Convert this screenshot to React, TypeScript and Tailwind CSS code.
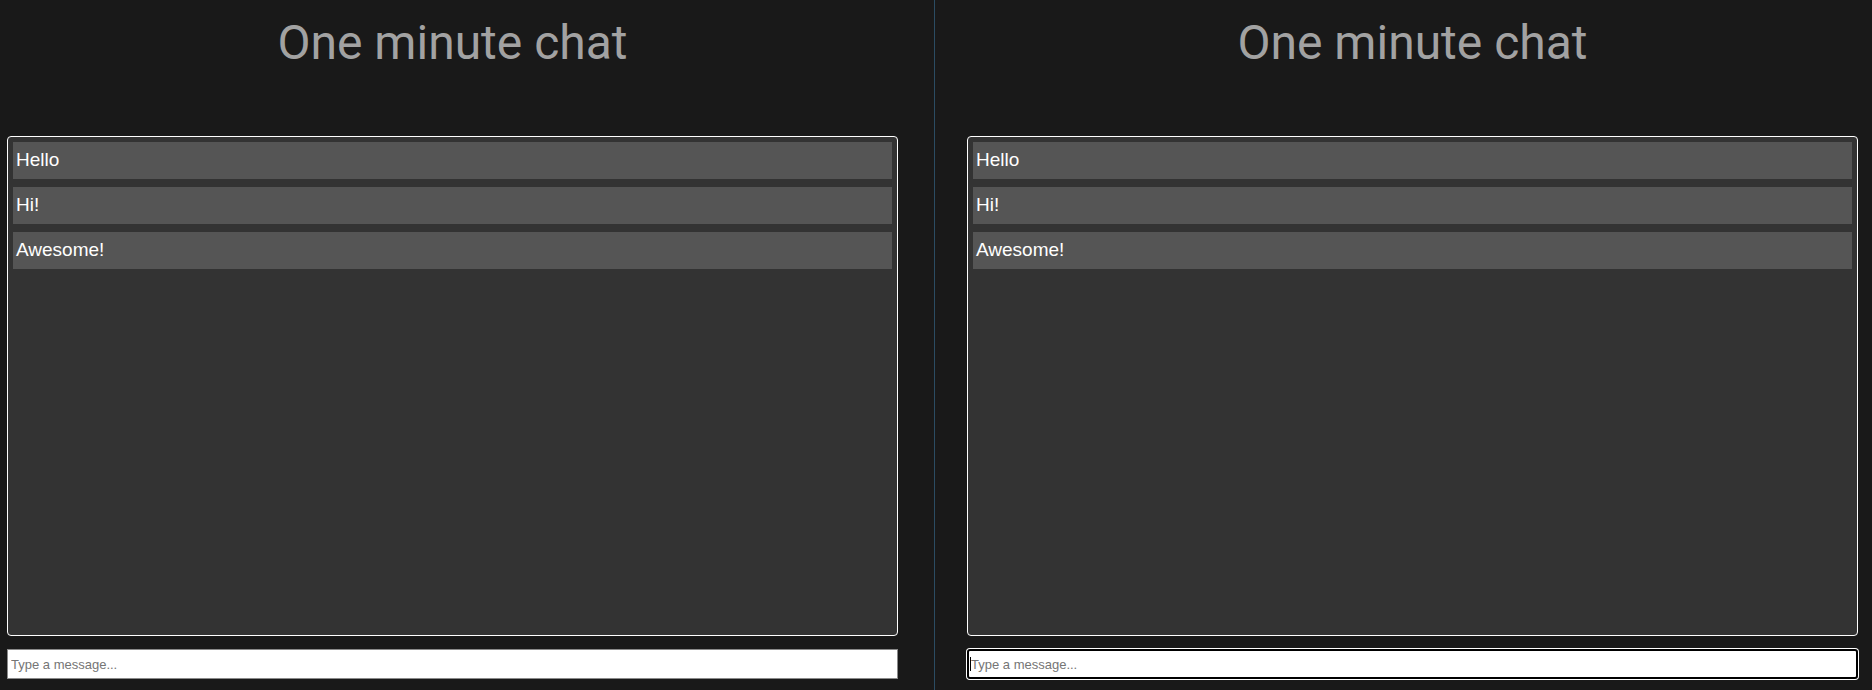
const messages = ["Hello", "Hi!", "Awesome!"];

function ChatPane({ focused }: { focused?: boolean }) {
  return (
    <div className="flex w-[891px] flex-col">
      <h1 className="mt-[15px] text-center font-['Roboto',sans-serif] text-[48px] leading-[56px] text-[#a2a2a2]">
        One minute chat
      </h1>
      <div className="mt-[65px] flex h-[500px] flex-col gap-[8px] rounded-[4px] border border-white bg-[#333333] p-[5px]">
        {messages.map((m) => (
          <div
            key={m}
            className="h-[37px] bg-[#555555] px-[3px] pt-[7px] font-['Liberation_Sans',Arial,sans-serif] text-[19px] leading-[22px] text-white"
          >
            {m}
          </div>
        ))}
      </div>
      <div className="relative mt-[13px]">
        {focused ? (
          <>
            <input
              type="text"
              placeholder="Type a message..."
              className="box-border h-[30px] w-full rounded-[3px] border-2 border-black bg-white px-[2px] font-['Liberation_Sans',Arial,sans-serif] text-[13px] text-black shadow-[0_0_0_1px_#ffffff] outline-none placeholder:text-[#757575]"
            />
            <span className="absolute left-[3px] top-[8px] h-[14px] w-px bg-black" />
          </>
        ) : (
          <input
            type="text"
            placeholder="Type a message..."
            className="box-border h-[30px] w-full border border-[#8a8a8a] bg-white px-[3px] font-['Liberation_Sans',Arial,sans-serif] text-[13px] text-black outline-none placeholder:text-[#757575]"
          />
        )}
      </div>
    </div>
  );
}

export default function App() {
  return (
    <div className="flex h-[690px] w-[1872px] bg-[#191919]">
      <div className="w-[934px] pl-[7px]">
        <ChatPane />
      </div>
      <div className="w-px bg-[#2b4c62]" />
      <div className="flex-1 pl-[32px]">
        <ChatPane focused />
      </div>
    </div>
  );
}
